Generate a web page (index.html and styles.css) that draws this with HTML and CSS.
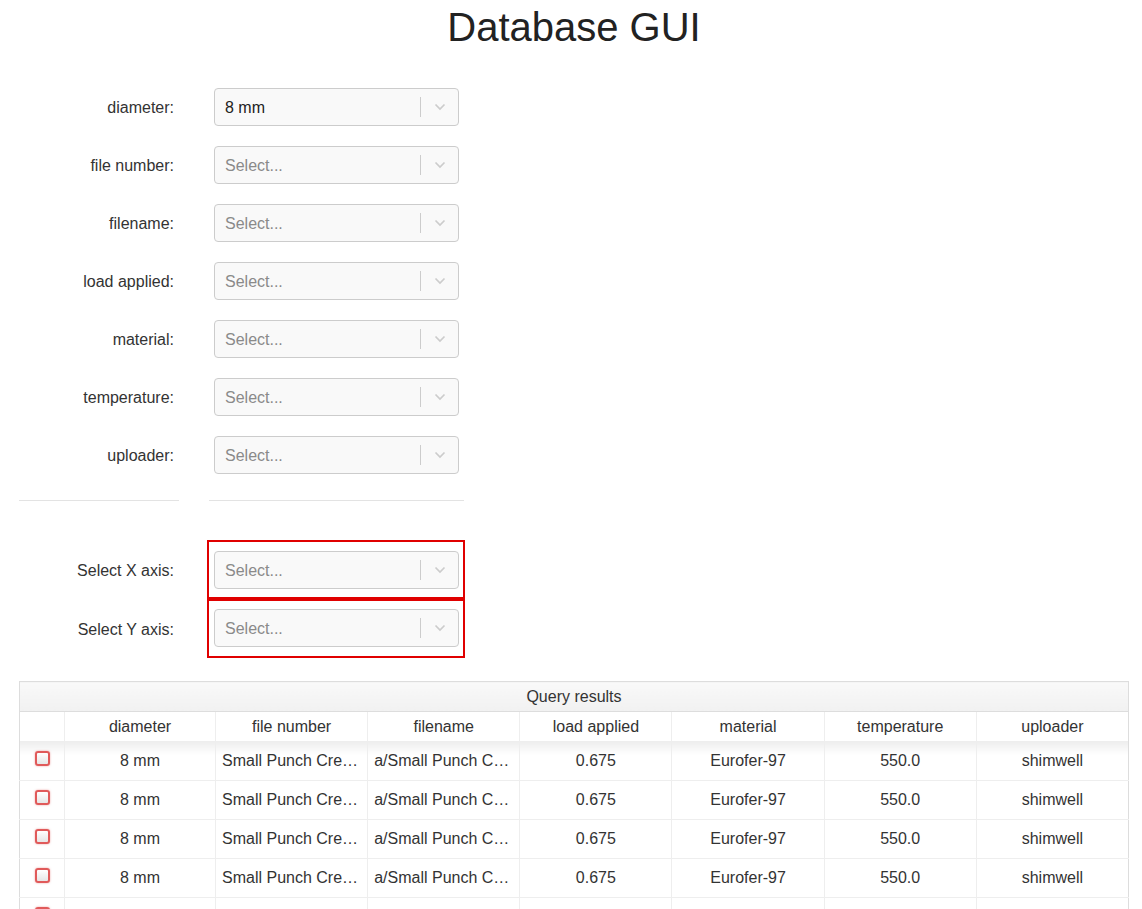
FILE: index.html
```html
<!DOCTYPE html>
<html>
<head>
<meta charset="utf-8">
<link rel="stylesheet" href="styles.css">
</head>
<body>
<h1 class="title">Database GUI</h1>

<div class="form">
  <div class="row"><div class="label">diameter:</div><div class="field"><div class="select"><span class="value">8 mm</span><span class="sep"></span><span class="arrow"><svg width="12" height="8" viewBox="0 0 12 8"><path d="M1.5 1.5 L6 6 L10.5 1.5" fill="none" stroke="#ccc" stroke-width="1.7"/></svg></span></div></div></div>
  <div class="row"><div class="label">file number:</div><div class="field"><div class="select"><span class="placeholder">Select...</span><span class="sep"></span><span class="arrow"><svg width="12" height="8" viewBox="0 0 12 8"><path d="M1.5 1.5 L6 6 L10.5 1.5" fill="none" stroke="#ccc" stroke-width="1.7"/></svg></span></div></div></div>
  <div class="row"><div class="label">filename:</div><div class="field"><div class="select"><span class="placeholder">Select...</span><span class="sep"></span><span class="arrow"><svg width="12" height="8" viewBox="0 0 12 8"><path d="M1.5 1.5 L6 6 L10.5 1.5" fill="none" stroke="#ccc" stroke-width="1.7"/></svg></span></div></div></div>
  <div class="row"><div class="label">load applied:</div><div class="field"><div class="select"><span class="placeholder">Select...</span><span class="sep"></span><span class="arrow"><svg width="12" height="8" viewBox="0 0 12 8"><path d="M1.5 1.5 L6 6 L10.5 1.5" fill="none" stroke="#ccc" stroke-width="1.7"/></svg></span></div></div></div>
  <div class="row"><div class="label">material:</div><div class="field"><div class="select"><span class="placeholder">Select...</span><span class="sep"></span><span class="arrow"><svg width="12" height="8" viewBox="0 0 12 8"><path d="M1.5 1.5 L6 6 L10.5 1.5" fill="none" stroke="#ccc" stroke-width="1.7"/></svg></span></div></div></div>
  <div class="row"><div class="label">temperature:</div><div class="field"><div class="select"><span class="placeholder">Select...</span><span class="sep"></span><span class="arrow"><svg width="12" height="8" viewBox="0 0 12 8"><path d="M1.5 1.5 L6 6 L10.5 1.5" fill="none" stroke="#ccc" stroke-width="1.7"/></svg></span></div></div></div>
  <div class="row"><div class="label">uploader:</div><div class="field"><div class="select"><span class="placeholder">Select...</span><span class="sep"></span><span class="arrow"><svg width="12" height="8" viewBox="0 0 12 8"><path d="M1.5 1.5 L6 6 L10.5 1.5" fill="none" stroke="#ccc" stroke-width="1.7"/></svg></span></div></div></div>
</div>

<div class="rules"><hr class="rule rule-left"><hr class="rule rule-right"></div>

<div class="axes">
  <div class="axis-row first"><div class="label">Select X axis:</div><div class="axis-box"><div class="select"><span class="placeholder">Select...</span><span class="sep"></span><span class="arrow"><svg width="12" height="8" viewBox="0 0 12 8"><path d="M1.5 1.5 L6 6 L10.5 1.5" fill="none" stroke="#ccc" stroke-width="1.7"/></svg></span></div></div></div>
  <div class="axis-row"><div class="label">Select Y axis:</div><div class="axis-box"><div class="select"><span class="placeholder">Select...</span><span class="sep"></span><span class="arrow"><svg width="12" height="8" viewBox="0 0 12 8"><path d="M1.5 1.5 L6 6 L10.5 1.5" fill="none" stroke="#ccc" stroke-width="1.7"/></svg></span></div></div></div>
</div>

<table class="results">
  <colgroup>
    <col class="c-check"><col class="c-first"><col><col><col><col><col><col>
  </colgroup>
  <thead>
    <tr><th class="caption" colspan="8">Query results</th></tr>
    <tr class="heads"><th></th><th>diameter</th><th>file number</th><th>filename</th><th>load applied</th><th>material</th><th>temperature</th><th>uploader</th></tr>
  </thead>
  <tbody>
    <tr><td class="chk"><span class="box"></span></td><td>8 mm</td><td class="left">Small Punch Creep Test 01</td><td class="left">a/Small Punch Creep Test 01.csv</td><td>0.675</td><td>Eurofer-97</td><td>550.0</td><td>shimwell</td></tr>
    <tr><td class="chk"><span class="box"></span></td><td>8 mm</td><td class="left">Small Punch Creep Test 02</td><td class="left">a/Small Punch Creep Test 02.csv</td><td>0.675</td><td>Eurofer-97</td><td>550.0</td><td>shimwell</td></tr>
    <tr><td class="chk"><span class="box"></span></td><td>8 mm</td><td class="left">Small Punch Creep Test 03</td><td class="left">a/Small Punch Creep Test 03.csv</td><td>0.675</td><td>Eurofer-97</td><td>550.0</td><td>shimwell</td></tr>
    <tr><td class="chk"><span class="box"></span></td><td>8 mm</td><td class="left">Small Punch Creep Test 04</td><td class="left">a/Small Punch Creep Test 04.csv</td><td>0.675</td><td>Eurofer-97</td><td>550.0</td><td>shimwell</td></tr>
    <tr><td class="chk"><span class="box"></span></td><td>8 mm</td><td class="left">Small Punch Creep Test 05</td><td class="left">a/Small Punch Creep Test 05.csv</td><td>0.675</td><td>Eurofer-97</td><td>550.0</td><td>shimwell</td></tr>
    <tr><td class="chk"><span class="box"></span></td><td>8 mm</td><td class="left">Small Punch Creep Test 06</td><td class="left">a/Small Punch Creep Test 06.csv</td><td>0.675</td><td>Eurofer-97</td><td>550.0</td><td>shimwell</td></tr>
  </tbody>
</table>
</body>
</html>
```

FILE: styles.css
```css
html, body {
  margin: 0;
  padding: 0;
  background: #fff;
}
body {
  padding: 0 13px 0 19px;
  font-family: "Liberation Sans", Arial, sans-serif;
  font-size: 16px;
  color: #333;
}
.title {
  margin: 5px 0 0 0;
  font-size: 40px;
  line-height: 44px;
  font-weight: 400;
  text-align: center;
  color: #222;
}
.form {
  margin-top: 39px;
  display: flex;
  flex-direction: column;
  gap: 20px;
}
.row, .axis-row {
  display: flex;
  align-items: center;
}
.label {
  width: 160px;
  box-sizing: border-box;
  padding: 2px 5px 0 0;
  text-align: right;
}
.field {
  margin-left: 30px;
  width: 255px;
  box-sizing: border-box;
  padding: 0 5px;
}
.select {
  height: 38px;
  box-sizing: border-box;
  border: 1px solid #ccc;
  border-radius: 4px;
  background: #f9f9f9;
  display: flex;
  align-items: center;
}
.value, .placeholder {
  flex: 1;
  padding: 2px 0 0 10px;
  white-space: nowrap;
}
.value { color: #222; }
.placeholder { color: #8a8a8a; }
.sep {
  width: 1px;
  height: 20px;
  background: #ccc;
}
.arrow {
  width: 37px;
  display: flex;
  justify-content: center;
  align-items: center;
}
.arrow svg { display: block; }
.rules {
  display: flex;
  margin-top: 26px;
  gap: 30px;
}
.rule {
  margin: 0;
  border: 0;
  border-top: 1px solid #e3e3e3;
  height: 0;
}
.rule-left { width: 160px; }
.rule-right { width: 255px; }
.axes {
  margin-top: 39px;
  display: flex;
  flex-direction: column;
}
.axis-row { height: 59px; }
.axis-box {
  margin-left: 28px;
  width: 258px;
  height: 59px;
  box-sizing: border-box;
  border: 2px solid #e00000;
  padding: 8px 4px 0 5px;
}
.axis-row.first .axis-box { padding-top: 9px; }
.results {
  margin-top: 23px;
  width: 1110px;
  border-collapse: collapse;
  table-layout: fixed;
  border: 1px solid #ddd;
}
.c-check { width: 45px; }
.c-first { width: 151px; }
.results th, .results td {
  font-weight: 400;
  text-align: center;
  white-space: nowrap;
  overflow: hidden;
  text-overflow: ellipsis;
  padding: 0 6px;
}
.caption {
  height: 29px;
  background: linear-gradient(#f9f9f9, #f1f1f1);
  border-bottom: 1px solid #ddd;
}
.heads th {
  height: 29px;
  border-left: 1px solid #eee;
  background: #fff;
}
.heads th:first-child { border-left: 0; }
.results td {
  height: 38px;
  border-left: 1px solid #eee;
  border-top: 1px solid #eee;
}
.results td:first-child { border-left: 0; }
.results tbody tr:first-child td {
  border-top: 0;
  height: 39px;
  background: linear-gradient(rgba(0,0,0,0.07), rgba(0,0,0,0) 14px);
}
.results td.left { text-align: left; }
.chk { padding: 0; }
.box {
  display: inline-block;
  width: 11px;
  height: 11px;
  border: 2px solid #e05a5a;
  border-radius: 3px;
  background: linear-gradient(#fff, #e6e6e6);
  box-shadow: 0 0 2px rgba(220,60,60,0.5);
  vertical-align: middle;
  margin-top: -6px;
}
```
